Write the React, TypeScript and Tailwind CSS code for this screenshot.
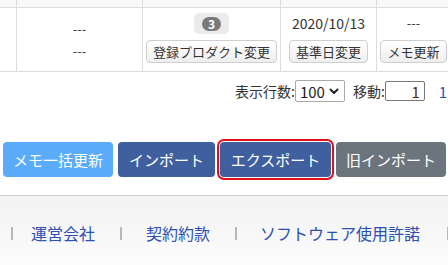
const SmallButton = ({ children }: { children: React.ReactNode }) => (
  <button className="h-[23px] px-[6px] rounded-[4px] border border-[#cfcfcf] bg-linear-to-b from-white to-[#eeeeee] text-[13px] leading-none text-[#333] whitespace-nowrap">
    {children}
  </button>
);

const ActionButton = ({ label, className }: { label: string; className: string }) => (
  <button className={`h-[35px] rounded-[4px] text-white text-[15px] leading-none whitespace-nowrap ${className}`}>
    {label}
  </button>
);

const Sep = ({ className = "" }: { className?: string }) => (
  <span className={`block w-[2px] h-[13px] bg-[#b8b8b8] shrink-0 ${className}`} />
);

export default function App() {
  return (
    <div className="w-[448px] h-[265px] overflow-hidden bg-white flex flex-col font-['Noto_Sans_CJK_JP','Liberation_Sans',sans-serif] text-[#333]">
      {/* header row (cut off) */}
      <div className="flex h-[8px] shrink-0 border-b border-[#dddddd] bg-[#f8f8f8]">
        <div className="w-[17px] shrink-0 border-r border-[#dddddd]" />
        <div className="w-[126px] shrink-0 border-r border-[#dddddd]" />
        <div className="w-[138px] shrink-0 border-r border-[#dddddd]" />
        <div className="w-[96px] shrink-0 border-r border-[#dddddd]" />
        <div className="w-[74px] shrink-0 border-r border-[#dddddd]" />
      </div>

      {/* data row */}
      <div className="flex h-[64px] shrink-0 border-b border-[#dddddd]">
        <div className="w-[17px] shrink-0 border-r border-[#dddddd]" />
        <div className="w-[126px] shrink-0 border-r border-[#dddddd] flex flex-col items-center justify-center text-[13px] leading-[22px] text-[#444]">
          <span>---</span>
          <span>---</span>
        </div>
        <div className="w-[138px] shrink-0 border-r border-[#dddddd] flex flex-col items-center pt-[5px]">
          <div className="w-[35px] h-[21px] rounded-[5px] bg-[#ebebeb] flex items-center justify-center">
            <span className="w-[19px] h-[14px] rounded-full bg-[#7a7a7a] text-white text-[12px] font-bold leading-[14px] text-center">3</span>
          </div>
          <div className="mt-[4px]">
            <SmallButton>登録プロダクト変更</SmallButton>
          </div>
        </div>
        <div className="w-[96px] shrink-0 border-r border-[#dddddd] flex flex-col items-center pt-[5px]">
          <span className="text-[14px] leading-[20px]">2020/10/13</span>
          <div className="mt-[5px]">
            <SmallButton>基準日変更</SmallButton>
          </div>
        </div>
        <div className="w-[74px] shrink-0 border-r border-[#dddddd] flex flex-col items-center pt-[5px]">
          <span className="text-[13px] leading-[20px] text-[#444]">---</span>
          <div className="mt-[5px]">
            <SmallButton>メモ更新</SmallButton>
          </div>
        </div>
      </div>

      {/* pager */}
      <div className="flex items-center h-[22px] mt-[8px] pl-[235px] text-[14px] leading-none shrink-0">
        <span className="whitespace-nowrap">表示行数:</span>
        <div className="w-[50px] h-[22px] shrink-0 border border-[#aaaaaa] rounded-[2px] flex items-center pl-[4px] pr-[5px] justify-between text-[15px] text-[#222]">
          <span>100</span>
          <svg width="10" height="7" viewBox="0 0 10 7" fill="none" stroke="#222" strokeWidth="2" strokeLinecap="round" strokeLinejoin="round">
            <path d="M1.5 1.5 5 5l3.5-3.5" />
          </svg>
        </div>
        <span className="ml-[8px] whitespace-nowrap">移動:</span>
        <div className="w-[40px] h-[20px] shrink-0 border border-[#777777] rounded-[2px] flex items-center justify-end pr-[4px] text-[15px] text-[#5a1e1e]">
          1
        </div>
        <span className="ml-[14px] text-[15px] text-[#2c4fb4]">1</span>
      </div>

      {/* action buttons */}
      <div className="flex items-center pl-[3px] gap-[5px] mt-[40px] shrink-0">
        <ActionButton label="メモ一括更新" className="w-[110px] bg-[#5aabfa]" />
        <ActionButton label="インポート" className="w-[97px] bg-[#3f5f9f]" />
        <ActionButton label="エクスポート" className="w-[111px] bg-[#3f5f9f] outline-2 outline-offset-[1px] outline-[#e0101a]" />
        <ActionButton label="旧インポート" className="w-[110px] bg-[#6c757d]" />
      </div>

      {/* footer */}
      <div className="mt-[18px] flex-1 border-t border-[#cfcfcf] bg-linear-to-b from-[#f2f2f2] to-[#fcfcfc]">
        <div className="flex items-center pt-[25px] pl-[11px] text-[16px] leading-[24px] text-[#2c4fb4] whitespace-nowrap">
          <Sep />
          <a className="ml-[18px]">運営会社</a>
          <Sep className="ml-[25px]" />
          <a className="ml-[24px]">契約約款</a>
          <Sep className="ml-[25px]" />
          <a className="ml-[23px]">ソフトウェア使用許諾</a>
          <Sep className="ml-[27px]" />
        </div>
      </div>
    </div>
  );
}
